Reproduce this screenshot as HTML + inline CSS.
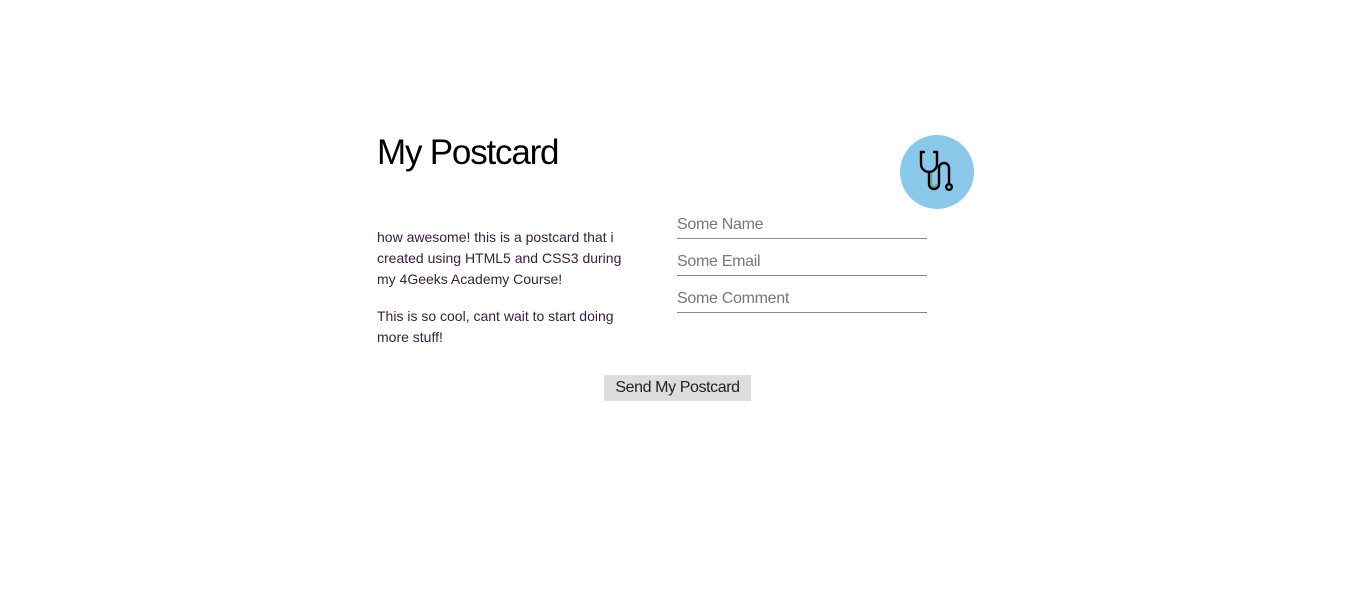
<!DOCTYPE html>
<html><head><style>
body{margin:0;width:1359px;height:605px;background:#fff;font-family:"Liberation Sans",sans-serif;position:relative;overflow:hidden}
h1{position:absolute;left:377px;top:133px;margin:0;font-size:35px;font-weight:normal;color:#000;letter-spacing:-1.2px;line-height:40px}
.circ{position:absolute;left:900px;top:135px;width:74px;height:74px;border-radius:50%;background:#8ac8ea}
.p{position:absolute;left:377px;font-size:14px;color:#3a2040;line-height:21px;letter-spacing:0px;white-space:nowrap}
.in{position:absolute;left:677px;width:250px;height:24px;border-bottom:1px solid #888;font-size:16px;color:#777;line-height:22px;letter-spacing:-0.3px}
.btn{position:absolute;left:604px;top:375px;width:147px;height:26px;background:#ddd;font-size:16px;color:#222;text-align:center;line-height:25px;letter-spacing:-0.4px}
</style></head><body>
<h1>My Postcard</h1>
<div class="circ"><svg width="74" height="74" viewBox="0 0 74 74">
<g fill="none" stroke="#000" stroke-width="2.4" stroke-linecap="round">
<path d="M24 17h-3v12a8 8 0 0 0 16 0V17h-3"/>
<path d="M29 37v12a5 5 0 0 0 10 0V33a5 5 0 0 1 10 0v15"/>
<circle cx="49" cy="52" r="2.8"/>
</g>
<path d="M31.5 38v11a2.5 2.5 0 0 0 5 0" stroke="#5aaa70" stroke-width="1.5" fill="none"/>
</svg></div>
<div class="p" style="top:227px">how awesome! this is a postcard that i<br>created using HTML5 and CSS3 during<br>my 4Geeks Academy Course!</div>
<div class="p" style="top:306px">This is so cool, cant wait to start doing<br>more stuff!</div>
<div class="in" style="top:214px">Some Name</div>
<div class="in" style="top:251px">Some Email</div>
<div class="in" style="top:288px">Some Comment</div>
<div class="btn">Send My Postcard</div>
</body></html>
